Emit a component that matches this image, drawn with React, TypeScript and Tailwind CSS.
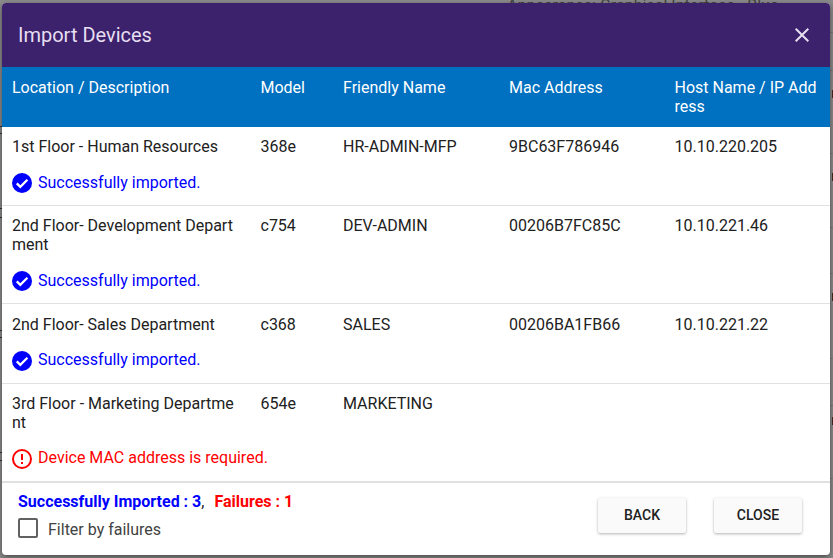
import React from 'react';

const font = "font-['Roboto',sans-serif]";

interface Device {
  location: string;
  model: string;
  name: string;
  mac: string;
  host: string;
  message: string;
  failed?: boolean;
}

const devices: Device[] = [
  { location: '1st Floor - Human Resources', model: '368e', name: 'HR-ADMIN-MFP', mac: '9BC63F786946', host: '10.10.220.205', message: 'Successfully imported.' },
  { location: '2nd Floor- Development Department', model: 'c754', name: 'DEV-ADMIN', mac: '00206B7FC85C', host: '10.10.221.46', message: 'Successfully imported.' },
  { location: '2nd Floor- Sales Department', model: 'c368', name: 'SALES', mac: '00206BA1FB66', host: '10.10.221.22', message: 'Successfully imported.' },
  { location: '3rd Floor - Marketing Department', model: '654e', name: 'MARKETING', mac: '', host: '', message: 'Device MAC address is required.', failed: true },
];

const columns = 'grid grid-cols-[248.5px_82.5px_166px_165.5px_1fr]';

function CheckIcon() {
  return (
    <svg viewBox="0 0 20 20" className="h-5 w-5 shrink-0">
      <circle cx="10" cy="10" r="10" fill="#0000ff" />
      <path d="M4.8 10.4l3.5 3.5L15.4 6.8" fill="none" stroke="#fff" strokeWidth="2.3" />
    </svg>
  );
}

function ErrorIcon() {
  return (
    <svg viewBox="0 0 20 20" className="h-5 w-5 shrink-0">
      <circle cx="10" cy="10" r="9" fill="none" stroke="#ff0000" strokeWidth="2" />
      <path d="M9 5h2v6H9zM9 13h2v2H9z" fill="#ff0000" />
    </svg>
  );
}

function CloseIcon() {
  return (
    <svg viewBox="0 0 24 24" className="h-6 w-6" fill="currentColor">
      <path d="M19 6.41L17.59 5 12 10.59 6.41 5 5 6.41 10.59 12 5 17.59 6.41 19 12 13.41 17.59 19 19 17.59 13.41 12z" />
    </svg>
  );
}

function DeviceRow({ device }: { device: Device }) {
  return (
    <div className="border-b border-[#e0e0e0] px-[10px] pt-[10.1px] pb-[12.14px]">
      <div className={columns}>
        <div className="break-all pr-[22px]">{device.location}</div>
        <div>{device.model}</div>
        <div>{device.name}</div>
        <div>{device.mac}</div>
        <div>{device.host}</div>
      </div>
      <div className={`mt-[17px] flex h-[20px] items-center gap-[6px] ${device.failed ? 'text-[#ff0000]' : 'text-[#0000ff]'}`}>
        {device.failed ? <ErrorIcon /> : <CheckIcon />}
        <span className="mb-[2px]">{device.message}</span>
      </div>
    </div>
  );
}

function FooterButton({ label }: { label: string }) {
  return (
    <button
      type="button"
      className="h-[35px] w-[88px] rounded-[2px] bg-[#fafafa] text-[14px] font-medium text-[#212121] shadow-[0_1px_3px_rgba(0,0,0,0.3)]"
    >
      {label}
    </button>
  );
}

// scraps of the page behind the overlay that show around the dialog
function Backdrop() {
  return (
    <div className="absolute inset-0 overflow-hidden bg-[#8c8c8c]">
      <div className="absolute top-[-4px] left-[507px] text-[16px] text-[#444444]">Appearance: Graphical Interface - Blue</div>
      {[32, 70, 153, 227, 273, 358, 405, 478].map((y) => (
        <div key={y} className="absolute right-0 h-px w-[3px] bg-[#7a7a7a]" style={{ top: y }} />
      ))}
      {[90, 173, 293, 417].map((y) => (
        <div key={y} className="absolute right-0 h-[8px] w-px bg-[#4a2a20]" style={{ top: y }} />
      ))}
      {[126, 133, 208, 217, 330, 337, 452, 460].map((y) => (
        <div key={y} className="absolute left-0 h-px w-[2px] bg-[#333333]" style={{ top: y }} />
      ))}
    </div>
  );
}

export default function App() {
  return (
    <div className={`${font} relative h-[558px] w-[833px] overflow-hidden pt-[3px] pl-[2px] text-[16px] leading-[19px] text-[#212121]`}>
      <Backdrop />
      <div className="relative w-[828px] overflow-hidden rounded-[4px] bg-white shadow-[0_2px_6px_rgba(0,0,0,0.5)]">
        <div className="flex h-[64px] items-center justify-between bg-[#3c216d] pr-[16px] pl-[16px] text-[20px] text-[#e6dff0]">
          <span>Import Devices</span>
          <CloseIcon />
        </div>
        <div className={`${columns} h-[60px] bg-[#0070c0] px-[10px] pt-[11px] text-white`}>
          <div>Location / Description</div>
          <div>Model</div>
          <div>Friendly Name</div>
          <div>Mac Address</div>
          <div className="break-all">Host Name / IP Address</div>
        </div>
        {devices.map((device) => (
          <DeviceRow key={device.location} device={device} />
        ))}
        <div className="flex h-[73px] items-start justify-between border-t border-[#e0e0e0] pr-[28px] pl-[16px]">
          <div className="pt-[9px]">
            <div className="font-bold">
              <span className="text-[#0000ff]">Successfully Imported : 3</span>
              <span className="font-normal">, </span>
              <span className="ml-[6px] text-[#ff0000]">Failures : 1</span>
            </div>
            <div className="mt-[7px] flex items-start gap-[10px] text-[#424242]">
              <span className="h-[20px] w-[20px] rounded-[2px] border-2 border-[#616161]" />
              <span className="pt-[2px]">Filter by failures</span>
            </div>
          </div>
          <div className="flex gap-[28px] pt-[15px]">
            <FooterButton label="BACK" />
            <FooterButton label="CLOSE" />
          </div>
        </div>
      </div>
    </div>
  );
}
